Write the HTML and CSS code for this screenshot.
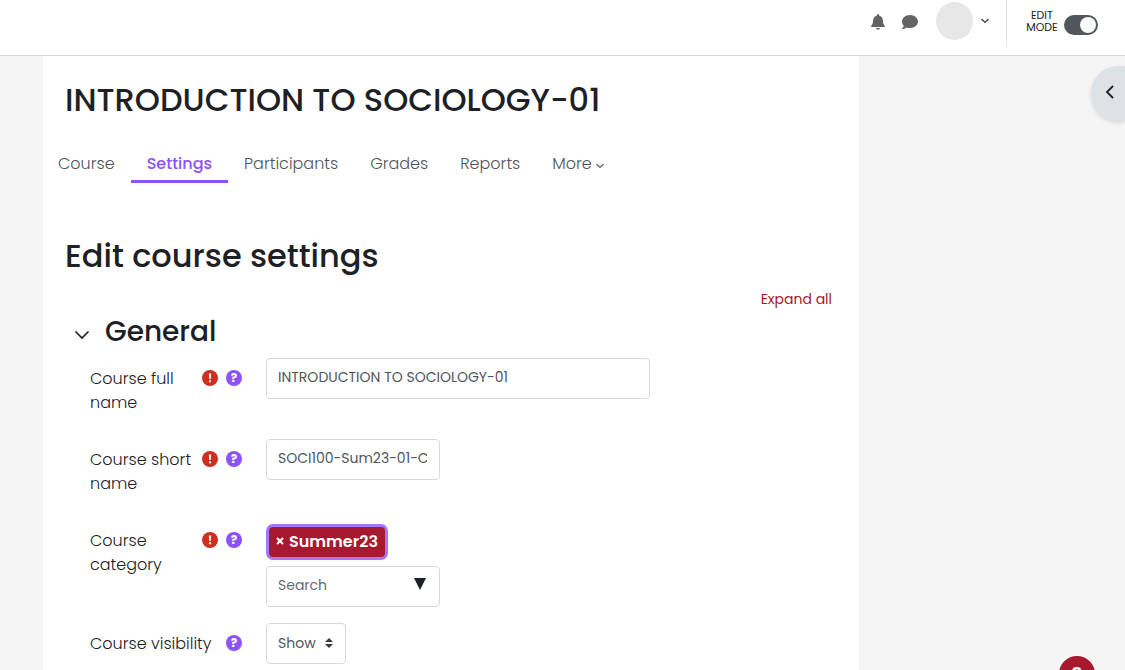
FILE: index.html
```html
<!DOCTYPE html>
<html lang="en">
  <head>
    <title>Edit course settings</title>
    <meta charset="UTF-8">
    <meta name="viewport" content="width=device-width, initial-scale=1.0">
    <link rel="stylesheet" href="styles.css">
  </head>
  <body>
    <header class="navbar">
      <button type="button" class="icon-btn bell" aria-label="Notifications">
        <svg width="16" height="16" viewBox="0 0 16 16"><path fill="#646464" d="M8 0c.6 0 1 .4 1 1v.6c2.300.500 3.900 2.500 3.900 4.900 0 3.300 1 4.500 1.900 5.200.300.300.200 1.300-.600 1.300H1.800c-.800 0-.900-1-.600-1.300.900-.700 1.900-1.900 1.900-5.200 0-2.400 1.600-4.400 3.900-4.900V1c0-.6.4-1 1-1zM6.200 14h3.600c0 1-.8 1.700-1.800 1.700S6.200 15 6.200 14z"/></svg>
      </button>
      <button type="button" class="icon-btn chat" aria-label="Messages">
        <svg width="16" height="15" viewBox="0 0 16 15"><path fill="#646464" d="M8 0c4.400 0 8 2.900 8 6.500S12.400 13 8 13c-1.200 0-2.300-.2-3.300-.6C3.800 13.200 2.300 14 .5 14c-.4 0-.5-.4-.2-.7.700-.700 1.300-1.700 1.400-2.700C.6 9.500 0 8 0 6.500 0 2.900 3.600 0 8 0z"/></svg>
      </button>
      <button type="button" class="icon-btn user-menu" aria-label="User menu">
        <span class="avatar"></span>
        <svg width="8" height="6" viewBox="0 0 8 6"><path fill="none" stroke="#343a40" stroke-width="1.200" d="M.5 1 4 4.500 7.500 1"/></svg>
      </button>
      <div class="edit-switch">
        <label for="editMode">Edit mode</label>
        <input type="checkbox" id="editMode" class="toggle" checked>
      </div>
    </header>

    <main class="page">
      <h1>INTRODUCTION TO SOCIOLOGY-01</h1>

      <nav class="tabs">
        <a href="#">Course</a>
        <a href="#" class="active">Settings</a>
        <a href="#">Participants</a>
        <a href="#">Grades</a>
        <a href="#">Reports</a>
        <a href="#">More<svg width="8" height="6" viewBox="0 0 8 6"><path fill="none" stroke="#646464" stroke-width="1.200" d="M.5 1 4 4.500 7.500 1"/></svg></a>
      </nav>

      <h2>Edit course settings</h2>
      <div class="expand"><a href="#">Expand all</a></div>

      <form>
        <h3>
          <button type="button" class="icon-btn" aria-label="Collapse General">
            <svg width="16" height="10" viewBox="0 0 16 10"><path fill="none" stroke="#1d2125" stroke-width="1.700" d="M1.500 1.500 8 8l6.500-6.500"/></svg>
          </button>
          General
        </h3>

        <div class="row">
          <div class="field-label">
            <label for="fullName">Course full name</label>
            <span class="icons">
              <svg class="req" width="16" height="16" viewBox="0 0 16 16"><circle cx="8" cy="8" r="8" fill="#ca3120"/><path fill="#fff" d="M6.900 3.500h2.200l-.3 5.500H7.200zM7 10.300h2v2H7z"/></svg>
              <button type="button" class="help" aria-label="Help with Course full name">?</button>
            </span>
          </div>
          <input type="text" id="fullName" class="full" value="INTRODUCTION TO SOCIOLOGY-01">
        </div>

        <div class="row">
          <div class="field-label">
            <label for="shortName">Course short name</label>
            <span class="icons">
              <svg class="req" width="16" height="16" viewBox="0 0 16 16"><circle cx="8" cy="8" r="8" fill="#ca3120"/><path fill="#fff" d="M6.900 3.500h2.200l-.3 5.500H7.200zM7 10.300h2v2H7z"/></svg>
              <button type="button" class="help" aria-label="Help with Course short name">?</button>
            </span>
          </div>
          <input type="text" id="shortName" value="SOCI100-Sum23-01-C">
        </div>

        <div class="row">
          <div class="field-label">
            <label for="category">Course category</label>
            <span class="icons">
              <svg class="req" width="16" height="16" viewBox="0 0 16 16"><circle cx="8" cy="8" r="8" fill="#ca3120"/><path fill="#fff" d="M6.900 3.500h2.200l-.3 5.500H7.200zM7 10.300h2v2H7z"/></svg>
              <button type="button" class="help" aria-label="Help with Course category">?</button>
            </span>
          </div>
          <div class="category">
            <button type="button" class="badge">
              <svg width="8" height="8" viewBox="0 0 8 8"><path stroke="#fff" stroke-width="2" d="m1 1 6 6M7 1 1 7"/></svg>
              Summer23
            </button>
            <div class="search">
              <input type="text" id="category" placeholder="Search">
              <svg class="caret" width="12" height="12" viewBox="0 0 12 12"><path fill="#1d2125" d="M0 0h12L6 12z"/></svg>
            </div>
          </div>
        </div>

        <div class="row">
          <div class="field-label">
            <label for="visibility">Course visibility</label>
            <span class="icons">
              <button type="button" class="help" aria-label="Help with Course visibility">?</button>
            </span>
          </div>
          <div class="select">
            <select id="visibility">
              <option>Show</option>
              <option>Hide</option>
            </select>
            <svg class="arrows" width="8" height="10" viewBox="0 0 8 10"><path fill="#343a40" d="M4 0l4 4H0zM0 6h8l-4 4z"/></svg>
          </div>
        </div>
      </form>
    </main>

    <button type="button" class="drawer-toggle" aria-label="Open block drawer">
      <svg width="9" height="14" viewBox="0 0 9 14"><path fill="none" stroke="#1d2125" stroke-width="1.800" d="M8 1 2 7l6 6"/></svg>
    </button>
    <button type="button" class="help-fab">?</button>
  </body>
</html>
```
FILE: styles.css
```css
* {
    box-sizing: border-box;
}
body {
    margin: 0;
    height: 100vh;
    overflow: hidden;
    display: flex;
    flex-direction: column;
    background-color: #f5f5f5;
    color: #1d2125;
    font-family: Poppins, Inter, sans-serif;
    font-size: 16px;
    font-weight: 300;
    line-height: 24px;
}
button,
input,
select {
    font-family: inherit;
    font-weight: inherit;
}
button {
    cursor: pointer;
}
a {
    text-decoration: none;
}
.icon-btn {
    display: flex;
    align-items: center;
    padding: 0;
    border: none;
    background: none;
}

/* top bar */
.navbar {
    display: flex;
    flex: none;
    justify-content: flex-end;
    align-items: flex-start;
    height: 56px;
    padding-right: 27px;
    background-color: white;
    border-bottom: 1px solid #d5d8dc;
}
.bell,
.chat {
    height: 44px;
    margin-right: 16px;
}
.user-menu {
    height: 42px;
    gap: 8px;
    margin: 0 17px 0 2px;
}
.avatar {
    width: 37px;
    height: 38px;
    border-radius: 50%;
    background-color: #e7e7e7;
}
.edit-switch {
    display: flex;
    align-items: center;
    gap: 6px;
    height: 46px;
    padding-left: 19px;
    border-left: 1px solid #dee2e6;
}
.edit-switch label {
    width: 32px;
    margin-bottom: 5px;
    font-size: 11px;
    font-weight: 400;
    line-height: 12px;
    text-align: center;
    text-transform: uppercase;
}
.toggle {
    appearance: none;
    display: flex;
    justify-content: flex-end;
    width: 34px;
    height: 20px;
    margin: 4px 0 0;
    padding: 2px;
    border-radius: 10px;
    background-color: #50565b;
}
.toggle::before {
    content: "";
    width: 16px;
    height: 16px;
    border-radius: 50%;
    background-color: #f8f9fa;
}

/* page */
.page {
    flex: auto;
    margin: 0 266px 0 43px;
    padding: 24px 22px 0;
    background-color: white;
}
h1,
h2,
h3 {
    margin: 0;
    font-weight: 500;
}
h1,
h2 {
    font-size: 32px;
    line-height: 40px;
}
.tabs {
    display: flex;
    margin: 24px -23px 0;
}
.tabs a {
    padding: 7px 16px 3px;
    border-bottom: 3px solid transparent;
    line-height: 26px;
    color: #50565b;
}
.tabs a.active {
    border-bottom-color: #8c52ff;
    color: #8c52ff;
    font-weight: 500;
}
.tabs svg {
    margin-left: 4px;
}
h2 {
    margin-top: 53px;
}
.expand {
    margin-top: 11px;
    padding-right: 5px;
    text-align: right;
    font-size: 14px;
    font-weight: 400;
}
.expand a {
    color: #a6192e;
}
h3 {
    display: flex;
    align-items: center;
    gap: 15px;
    margin: 3px 0 8px 9px;
    font-size: 28px;
    line-height: 36px;
}
h3 .icon-btn {
    padding-top: 5px;
}

/* form rows */
.row {
    display: grid;
    grid-template-columns: 152px 384px;
    column-gap: 24px;
    align-items: start;
    margin: 0 0 16px 25px;
}
.field-label {
    display: flex;
    justify-content: space-between;
    padding: 9px 0 8px;
}
.icons {
    display: flex;
    gap: 8px;
    padding-top: 3px;
}
.help {
    width: 16px;
    height: 16px;
    padding: 0;
    border: none;
    border-radius: 50%;
    background-color: #8c52ff;
    color: white;
    font-size: 12px;
    font-weight: 700;
    line-height: 16px;
}
input[type="text"],
select {
    width: 174px;
    height: 41px;
    padding: 0 12px 2px 11px;
    border: 1px solid #d5dade;
    border-radius: 4px;
    background-color: white;
    color: #50565b;
    font-size: 14px;
    font-weight: 400;
}
input.full {
    width: 100%;
}
input::placeholder {
    color: #646b71;
}
.category {
    display: flex;
    flex-direction: column;
    align-items: flex-start;
    gap: 9px;
    padding-top: 7px;
}
.badge {
    display: flex;
    align-items: center;
    gap: 5px;
    height: 30px;
    margin-left: 3px;
    padding: 0 7px 2px;
    border: none;
    border-radius: 4px;
    background-color: #a6192e;
    box-shadow: 0 0 0 3px #a577ff;
    color: white;
    font-size: 16px;
    font-weight: 600;
}
.search,
.select {
    position: relative;
    display: flex;
}
.caret {
    position: absolute;
    top: 12px;
    right: 14px;
}
.select {
    justify-self: start;
}
.select select {
    appearance: none;
    width: 80px;
}
.arrows {
    position: absolute;
    top: 15px;
    right: 13px;
    pointer-events: none;
}

/* floating buttons */
.drawer-toggle {
    position: fixed;
    top: 66px;
    right: 0;
    width: 34px;
    height: 55px;
    padding: 0 0 4px 2px;
    border: none;
    border-radius: 28px 0 0 28px;
    background-color: #dee2e6;
    box-shadow: 0 2px 4px rgba(0, 0, 0, 0.12);
}
.drawer-toggle svg {
    vertical-align: middle;
}
.help-fab {
    position: fixed;
    right: 30px;
    bottom: -22px;
    width: 36px;
    height: 36px;
    padding: 0;
    border: none;
    border-radius: 50%;
    background-color: #a6192e;
    color: white;
    font-size: 20px;
    font-weight: 600;
}
```
